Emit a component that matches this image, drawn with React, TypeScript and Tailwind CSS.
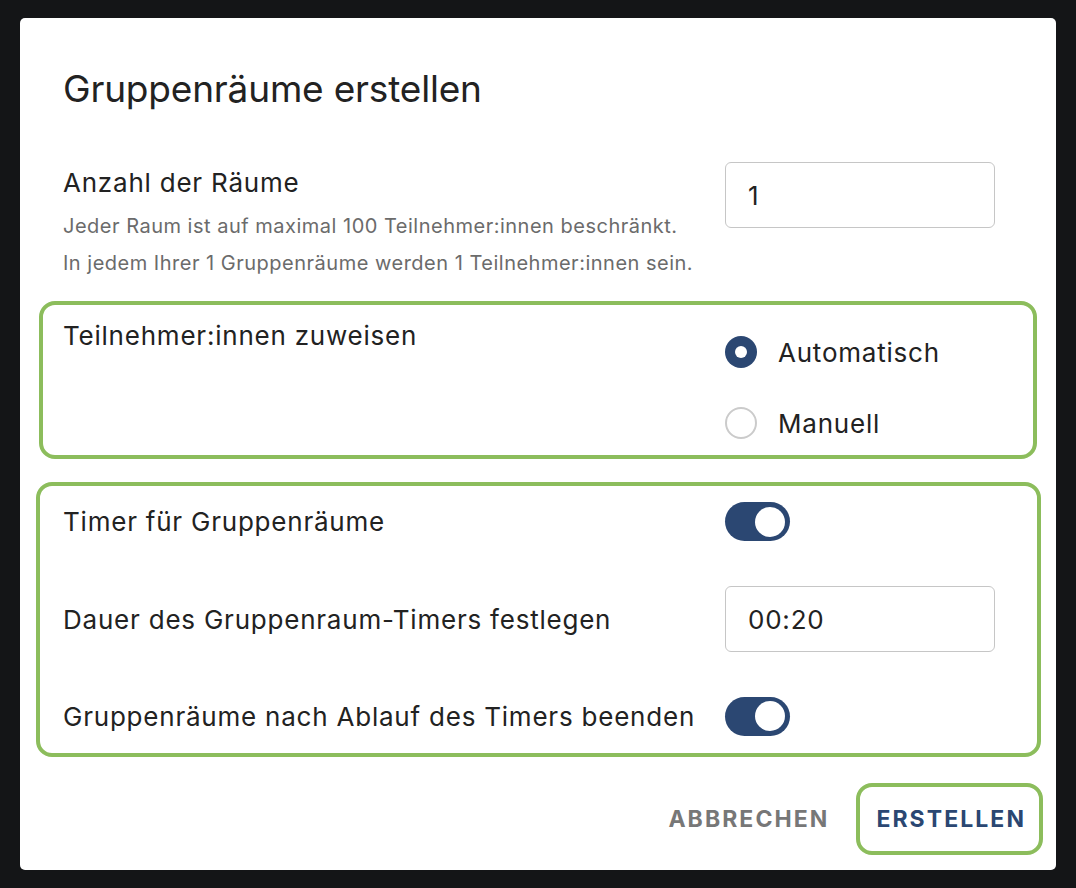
import React from 'react'

const NAVY = 'bg-[#2b4772]'

function Toggle() {
  return (
    <div className={`flex h-[39px] w-[65px] items-center justify-end rounded-full ${NAVY} pr-[5px]`}>
      <div className="size-[30px] rounded-full bg-white" />
    </div>
  )
}

function Radio({ checked, label }: { checked?: boolean; label: string }) {
  return (
    <div className="flex h-[48px] items-center gap-[21px]">
      {checked ? (
        <div className={`flex size-[32px] items-center justify-center rounded-full ${NAVY}`}>
          <div className="size-[12px] rounded-full bg-white" />
        </div>
      ) : (
        <div className="size-[32px] rounded-full border-2 border-[#cbcbcb]" />
      )}
      <span className="text-[26px] tracking-[0.03em] text-[#222]">{label}</span>
    </div>
  )
}

function TextBox({ value }: { value: string }) {
  return (
    <div className="flex h-[66px] w-[270px] items-center rounded-[6px] border border-[#c6c6c6] pl-[22px] text-[26px] tracking-[0.03em] text-[#222]">
      {value}
    </div>
  )
}

const label = 'text-[26px] tracking-[0.03em] text-[#222]'

export default function App() {
  return (
    <div
      className="min-h-[888px] w-full bg-[#141517] pl-[20px] pt-[18px]"
      style={{ fontFamily: 'Inter, "Noto Sans", sans-serif' }}
    >
      <div className="flex h-[852px] w-[1036px] flex-col rounded-[5px] bg-white px-[43px] pt-[49px]">
        <h1 className="h-[44px] text-[37px] leading-[44px] tracking-[-0.005em] text-[#222]">Gruppenräume erstellen</h1>

        <div className="mt-[51px] flex">
          <div className="w-[662px]">
            <div className={`mt-[5px] leading-[32px] ${label}`}>Anzahl der Räume</div>
            <div className="mt-[9px] text-[20px] leading-[37px] tracking-[0.025em] text-[#6b6b6b]">
              <p>Jeder Raum ist auf maximal 100 Teilnehmer:innen beschränkt.</p>
              <p>In jedem Ihrer 1 Gruppenräume werden 1 Teilnehmer:innen sein.</p>
            </div>
          </div>
          <TextBox value="1" />
        </div>

        <div className="-mx-[24px] mt-[19px] flex h-[158px] rounded-[16px] border-4 border-[#8cbd5c] pl-[20px]">
          <div className={`mt-[15px] w-[662px] leading-[32px] ${label}`}>Teilnehmer:innen zuweisen</div>
          <div className="flex flex-col gap-[23px] pt-[23px]">
            <Radio checked label="Automatisch" />
            <Radio label="Manuell" />
          </div>
        </div>

        <div className="-ml-[27px] -mr-[28px] mt-[23px] flex h-[275px] flex-col rounded-[16px] border-4 border-[#8cbd5c] pl-[23px] pt-[16px]">
          <div className="flex h-[39px] items-center">
            <div className={`w-[662px] ${label}`}>Timer für Gruppenräume</div>
            <Toggle />
          </div>
          <div className="mt-[45px] flex items-center">
            <div className={`w-[662px] ${label}`}>Dauer des Gruppenraum-Timers festlegen</div>
            <TextBox value="00:20" />
          </div>
          <div className="mt-[44px] flex h-[40px] items-center">
            <div className={`w-[662px] ${label}`}>Gruppenräume nach Ablauf des Timers beenden</div>
            <Toggle />
          </div>
        </div>

        <div className="-mr-[30px] mt-[26px] flex items-center justify-end gap-[27px]">
          <span className="text-[23px] font-bold tracking-[0.09em] text-[#777]">ABBRECHEN</span>
          <div className="flex h-[72px] items-center rounded-[16px] border-4 border-[#8cbd5c] pl-[16px] pr-[13px]">
            <span className="text-[23px] font-bold tracking-[0.09em] text-[#2b4772]">ERSTELLEN</span>
          </div>
        </div>
      </div>
    </div>
  )
}
